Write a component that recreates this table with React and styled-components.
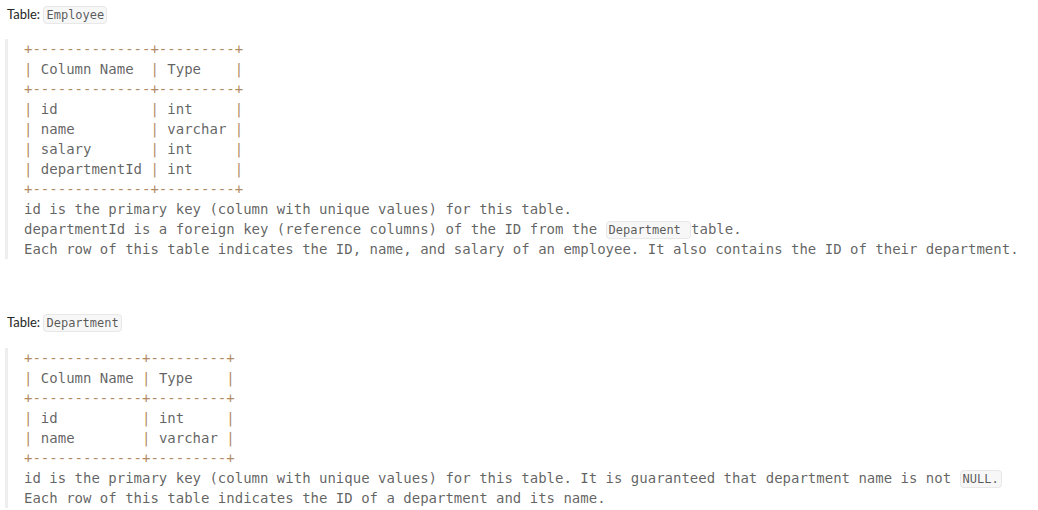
import React from "react";
import styled, { createGlobalStyle } from "styled-components";

const Global = createGlobalStyle`
  html, body { margin: 0; padding: 0; background: #ffffff; }
  body { font-family: Lato, "Liberation Sans", sans-serif; }
`;

const Page = styled.div`
  padding: 4px 0 0 5px;
  display: flex;
  flex-direction: column;
`;

const Label = styled.p`
  margin: 0;
  padding-left: 2px;
  font-family: Lato, "Liberation Sans", sans-serif;
  font-size: 13px;
  line-height: 20px;
  color: #262626;
`;

const Code = styled.code`
  font-family: "DejaVu Sans Mono", monospace;
  font-size: 12px;
  line-height: 16px;
  color: rgba(38, 38, 38, 0.75);
  background: #f7f7f7;
  border: 1px solid #e8e8e8;
  border-radius: 4px;
  padding: 1px 2px;
  white-space: pre;
`;

const Pre = styled.pre`
  margin: ${(p) => p.$mt}px 0 0 0;
  padding: 0 0 0 16px;
  border-left: 3px solid #eeeeee;
  font-family: "DejaVu Sans Mono", monospace;
  font-size: 14px;
  line-height: 20px;
  color: rgba(38, 38, 38, 0.72);
  white-space: pre;
`;

const Frame = styled.span`
  color: #b38b63;
`;

const Spacer = styled.div`
  height: ${(p) => p.$h}px;
`;

function TableLines({ lines }) {
  return lines.map((l, i) => {
    const parts = l.split(/([+|\-]+)/);
    return (
      <React.Fragment key={i}>
        {parts.map((p, j) =>
          /^[+|\-]+$/.test(p) ? <Frame key={j}>{p}</Frame> : <React.Fragment key={j}>{p}</React.Fragment>
        )}
        {"\n"}
      </React.Fragment>
    );
  });
}

const empLines = [
  "+--------------+---------+",
  "| Column Name  | Type    |",
  "+--------------+---------+",
  "| id           | int     |",
  "| name         | varchar |",
  "| salary       | int     |",
  "| departmentId | int     |",
  "+--------------+---------+",
];

const depLines = [
  "+-------------+---------+",
  "| Column Name | Type    |",
  "+-------------+---------+",
  "| id          | int     |",
  "| name        | varchar |",
  "+-------------+---------+",
];

export default function App() {
  return (
    <>
      <Global />
      <Page>
        <Label>
          Table: <Code>Employee</Code>
        </Label>
        <Pre $mt={15}>
          <TableLines lines={empLines} />
          {"id is the primary key (column with unique values) for this table.\n"}
          {"departmentId is a foreign key (reference columns) of the ID from the "}
          <Code>Department </Code>
          {"table.\n"}
          {"Each row of this table indicates the ID, name, and salary of an employee. It also contains the ID of their department."}
        </Pre>
        <Spacer $h={53} />
        <Label>
          Table: <Code>Department</Code>
        </Label>
        <Pre $mt={16}>
          <TableLines lines={depLines} />
          {"id is the primary key (column with unique values) for this table. It is guaranteed that department name is not "}
          <Code>NULL.</Code>
          {"\n"}
          {"Each row of this table indicates the ID of a department and its name."}
        </Pre>
      </Page>
    </>
  );
}
